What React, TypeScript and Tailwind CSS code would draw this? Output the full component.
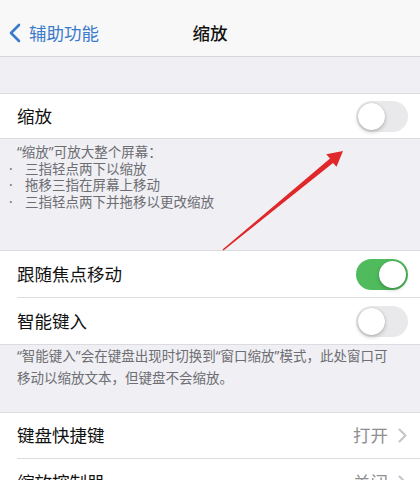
import React from "react";

const font = {
  fontFamily: '"Noto Sans", "Noto Sans CJK SC", sans-serif',
};

function Toggle({ on }: { on?: boolean }) {
  return (
    <div
      className={
        "relative h-[31px] w-[52px] rounded-full " +
        (on ? "bg-[#4fbb5c]" : "bg-[#e9e9eb]")
      }
    >
      <div
        className={
          "absolute top-[2px] h-[27px] w-[27px] rounded-full bg-white shadow-[0_2px_4px_rgba(0,0,0,0.22),0_0_1px_rgba(0,0,0,0.25)] " +
          (on ? "right-[2px]" : "left-[2px]")
        }
      />
    </div>
  );
}

function Chevron() {
  return (
    <svg width="9" height="15" viewBox="0 0 9 15" className="ml-[10px]">
      <path
        d="M1.5 1.5 L7.5 7.5 L1.5 13.5"
        fill="none"
        stroke="#c5c5c9"
        strokeWidth="2"
        strokeLinecap="round"
        strokeLinejoin="round"
      />
    </svg>
  );
}

function Row({
  label,
  height,
  right,
  divider,
}: {
  label: string;
  height: string;
  right: React.ReactNode;
  divider?: boolean;
}) {
  return (
    <div className={"flex items-center pl-[17px] " + height}>
      <div
        className={
          "flex h-full flex-1 items-center justify-between pr-[12px] " +
          (divider ? "border-b border-[#dcdce0]" : "")
        }
      >
        <span className="text-[17.5px] text-[#111]">{label}</span>
        {right}
      </div>
    </div>
  );
}

function Value({ text }: { text: string }) {
  return (
    <div className="flex items-center pr-[1px]">
      <span className="text-[17.5px] text-[#8e8e93]">{text}</span>
      <Chevron />
    </div>
  );
}

function Bullet({ text }: { text: string }) {
  return (
    <div className="flex">
      <span className="w-[16px] shrink-0">·</span>
      <span>{text}</span>
    </div>
  );
}

export default function App() {
  return (
    <div
      className="relative h-[480px] w-[420px] overflow-hidden bg-[#efeff4]"
      style={font}
    >
      {/* nav bar */}
      <div className="relative flex h-[57px] items-center border-b border-[#d6d6da] bg-[#f8f8f9] pt-[10px]">
        <div className="flex items-center pl-[8px] text-[#3a7bcc]">
          <svg width="14" height="20" viewBox="0 0 14 20">
            <path
              d="M11 2 L3 10 L11 18"
              fill="none"
              stroke="#3a7bcc"
              strokeWidth="2.6"
              strokeLinecap="round"
              strokeLinejoin="round"
            />
          </svg>
          <span className="ml-[7px] text-[17.5px]">辅助功能</span>
        </div>
        <div className="absolute left-0 right-0 text-center text-[17.5px] font-medium text-[#111]">
          缩放
        </div>
      </div>

      <div className="h-[36px]" />

      <div className="border-y border-[#dcdce0] bg-white">
        <Row label="缩放" height="h-[44px]" right={<Toggle />} />
      </div>

      <div className="h-[111px] pl-[9px] pt-[5px] text-[13.5px] leading-[16.5px] text-[#6d6d72]">
        <div className="pl-[8px]">“缩放”可放大整个屏幕：</div>
        <Bullet text="三指轻点两下以缩放" />
        <Bullet text="拖移三指在屏幕上移动" />
        <Bullet text="三指轻点两下并拖移以更改缩放" />
      </div>

      <div className="border-y border-[#dcdce0] bg-white">
        <Row label="跟随焦点移动" height="h-[47px]" right={<Toggle on />} divider />
        <Row label="智能键入" height="h-[46px]" right={<Toggle />} />
      </div>

      <div className="h-[67px] pl-[17px] pr-[10px] text-[13.5px] leading-[22px] text-[#6d6d72]">
        <div className="whitespace-nowrap">
          “智能键入”会在键盘出现时切换到“窗口缩放”模式，此处窗口可
        </div>
        <div>移动以缩放文本，但键盘不会缩放。</div>
      </div>

      <div className="border-t border-[#dcdce0] bg-white">
        <Row label="键盘快捷键" height="h-[46px]" right={<Value text="打开" />} divider />
        <Row label="缩放控制器" height="h-[46px]" right={<Value text="关闭" />} />
      </div>

      {/* annotation arrow */}
      <svg
        className="pointer-events-none absolute left-0 top-0"
        width="420"
        height="480"
        viewBox="0 0 420 480"
      >
        <polygon
          points="223.5,250.6 333,163 336.5,166.7 343,151 326.3,154.3 330,158.5 222.5,249.4"
          fill="#e0282b"
        />
      </svg>
    </div>
  );
}
